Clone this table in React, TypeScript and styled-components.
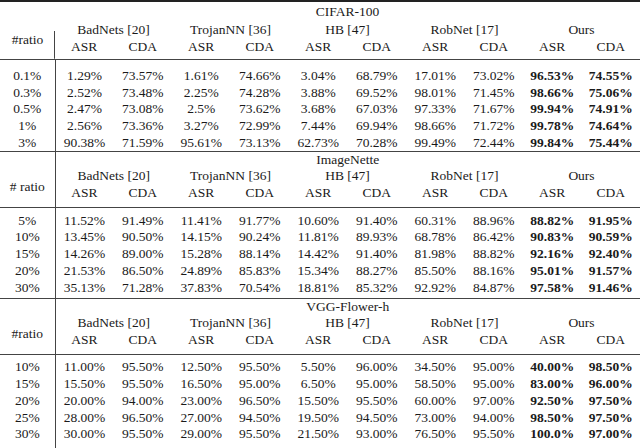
import React from "react";
import styled, { createGlobalStyle } from "styled-components";

const GlobalStyle = createGlobalStyle`
  html, body {
    margin: 0;
    padding: 0;
    background: #ffffff;
  }
  body {
    font-family: "Liberation Serif", "DejaVu Serif", serif;
    color: #1a1a1a;
  }
`;

type Dataset = {
  title: string;
  ratioLabel: string;
  rows: { ratio: string; values: string[] }[];
};

const groups = ["BadNets [20]", "TrojanNN [36]", "HB [47]", "RobNet [17]", "Ours"];

const datasets: Dataset[] = [
  {
    title: "CIFAR-100",
    ratioLabel: "#ratio",
    rows: [
      { ratio: "0.1%", values: ["1.29%", "73.57%", "1.61%", "74.66%", "3.04%", "68.79%", "17.01%", "73.02%", "96.53%", "74.55%"] },
      { ratio: "0.3%", values: ["2.52%", "73.48%", "2.25%", "74.28%", "3.88%", "69.52%", "98.01%", "71.45%", "98.66%", "75.06%"] },
      { ratio: "0.5%", values: ["2.47%", "73.08%", "2.5%", "73.62%", "3.68%", "67.03%", "97.33%", "71.67%", "99.94%", "74.91%"] },
      { ratio: "1%", values: ["2.56%", "73.36%", "3.27%", "72.99%", "7.44%", "69.94%", "98.66%", "71.72%", "99.78%", "74.64%"] },
      { ratio: "3%", values: ["90.38%", "71.59%", "95.61%", "73.13%", "62.73%", "70.28%", "99.49%", "72.44%", "99.84%", "75.44%"] },
    ],
  },
  {
    title: "ImageNette",
    ratioLabel: "# ratio",
    rows: [
      { ratio: "5%", values: ["11.52%", "91.49%", "11.41%", "91.77%", "10.60%", "91.40%", "60.31%", "88.96%", "88.82%", "91.95%"] },
      { ratio: "10%", values: ["13.45%", "90.50%", "14.15%", "90.24%", "11.81%", "89.93%", "68.78%", "86.42%", "90.83%", "90.59%"] },
      { ratio: "15%", values: ["14.26%", "89.00%", "15.28%", "88.14%", "14.42%", "91.40%", "81.98%", "88.82%", "92.16%", "92.40%"] },
      { ratio: "20%", values: ["21.53%", "86.50%", "24.89%", "85.83%", "15.34%", "88.27%", "85.50%", "88.16%", "95.01%", "91.57%"] },
      { ratio: "30%", values: ["35.13%", "71.28%", "37.83%", "70.54%", "18.81%", "85.32%", "92.92%", "84.87%", "97.58%", "91.46%"] },
    ],
  },
  {
    title: "VGG-Flower-h",
    ratioLabel: "#ratio",
    rows: [
      { ratio: "10%", values: ["11.00%", "95.50%", "12.50%", "95.50%", "5.50%", "96.00%", "34.50%", "95.00%", "40.00%", "98.50%"] },
      { ratio: "15%", values: ["15.50%", "95.50%", "16.50%", "95.00%", "6.50%", "95.00%", "58.50%", "95.00%", "83.00%", "96.00%"] },
      { ratio: "20%", values: ["20.00%", "94.00%", "23.00%", "96.50%", "15.50%", "95.50%", "60.00%", "97.00%", "92.50%", "97.50%"] },
      { ratio: "25%", values: ["28.00%", "96.50%", "27.00%", "94.50%", "19.50%", "94.50%", "73.00%", "94.00%", "98.50%", "97.50%"] },
      { ratio: "30%", values: ["30.00%", "95.50%", "29.00%", "95.50%", "21.50%", "93.00%", "76.50%", "95.50%", "100.0%", "97.00%"] },
    ],
  },
];

const App: React.FC = () => (
  <>
    <GlobalStyle />
    <Table>
      <colgroup>
        <col style={{ width: 55 }} />
        {Array.from({ length: 10 }).map((_, i) => (
          <col key={i} />
        ))}
      </colgroup>
      {datasets.map((ds, b) => {
        const first = b === 0;
        const last = b === datasets.length - 1;
        return (
          <Body key={ds.title} $last={last}>
            <TitleRow $first={first}>
              <Corner $first={first} />
              <TitleCell colSpan={10}>{ds.title}</TitleCell>
            </TitleRow>
            <GroupRow $first={first}>
              <RatioHead rowSpan={2} $first={first}>
                {ds.ratioLabel}
              </RatioHead>
              {groups.map((g) => (
                <GroupCell key={g} colSpan={2}>
                  {g}
                </GroupCell>
              ))}
            </GroupRow>
            <tr>
              {groups.flatMap((g) => [
                <HeadCell key={g + "a"} $first={first}>ASR</HeadCell>,
                <HeadCell key={g + "c"} $first={first}>CDA</HeadCell>,
              ])}
            </tr>
            {ds.rows.map((r, i) => (
              <DataRow
                key={r.ratio}
                $top={i === 0}
                $pad={i === ds.rows.length - 1 ? (first ? 0 : last ? 7 : 2) : 0}
                $first={first}
              >
                <RatioCell>{r.ratio}</RatioCell>
                {r.values.map((v, j) => (
                  <DataCell key={j} $bold={j >= 8}>
                    {v}
                  </DataCell>
                ))}
              </DataRow>
            ))}
          </Body>
        );
      })}
    </Table>
  </>
);

const Table = styled.table`
  width: 640px;
  table-layout: fixed;
  border-collapse: collapse;
  border-top: 2px solid #222;
  font-size: 13.5px;
  line-height: 16px;
  text-align: center;

  td {
    padding: 0;
    white-space: nowrap;
  }
`;

const Body = styled.tbody<{ $last: boolean }>`
  border-bottom: ${({ $last }) => ($last ? "2px solid #222" : "1px solid #444")};
`;

const TitleRow = styled.tr<{ $first: boolean }>`
  height: ${({ $first }) => ($first ? "20px" : "15px")};
`;

const GroupRow = styled.tr<{ $first: boolean }>`
  height: ${({ $first }) => ($first ? "18px" : "17px")};
`;

const Corner = styled.td<{ $first: boolean }>`
  border-right: ${({ $first }) => ($first ? "none" : "1px solid #444")};
`;

const TitleCell = styled.td`
  vertical-align: middle;
`;

const RatioHead = styled.td<{ $first: boolean }>`
  border-right: ${({ $first }) => ($first ? "none" : "1px solid #444")};
  border-bottom: 1px solid #444;
  background: ${({ $first }) =>
    $first ? "linear-gradient(#444, #444) right bottom / 1px 73% no-repeat" : "none"};
  vertical-align: middle;
`;

const GroupCell = styled.td`
  vertical-align: middle;
`;

const HeadCell = styled.td<{ $first: boolean }>`
  border-bottom: 1px solid #444;
  vertical-align: top;
  height: 16px;
  padding-bottom: ${({ $first }) => ($first ? "4px" : "6px")} !important;
`;

const DataRow = styled.tr<{ $top: boolean; $pad: number; $first: boolean }>`
  td {
    height: 16.75px;
    vertical-align: bottom;
    padding-top: ${({ $top, $first }) => ($top ? ($first ? "7px" : "4px") : "0")};
    padding-bottom: ${({ $pad }) => $pad}px;
  }
`;

const RatioCell = styled.td`
  border-right: 1px solid #444;
`;

const DataCell = styled.td<{ $bold: boolean }>`
  font-weight: ${({ $bold }) => ($bold ? 700 : 400)};
`;

export default App;
